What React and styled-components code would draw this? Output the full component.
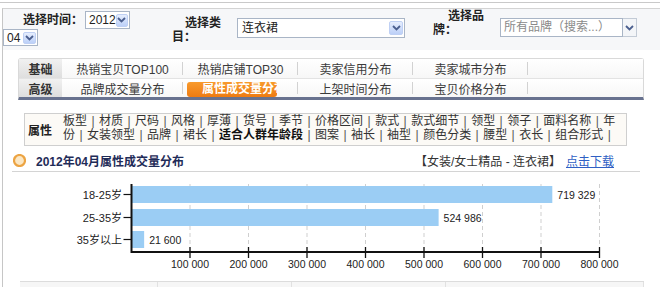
import React from 'react';
import styled, { createGlobalStyle } from 'styled-components';

const GlobalStyle = createGlobalStyle`
  html, body { margin: 0; padding: 0; background: #fff; }
  body {
    font-family: "Liberation Sans", "Noto Sans CJK SC", sans-serif;
    font-size: 12px;
    color: #333;
  }
`;

const Page = styled.div`
  width: 660px;
  height: 287px;
  overflow: hidden;
  padding-top: 2px;
  box-sizing: border-box;
`;

const TopRule = styled.div`
  height: 5px;
  border-top: 1px solid #c9c9c9;
`;

const Frame = styled.div`
  margin-left: 2px;
  border-left: 1px solid #c6c6c6;
  border-top: 1px solid #d3d3d3;
  height: 300px;
`;

const FilterBar = styled.div`
  display: flex;
  align-items: flex-start;
  height: 41px;
  background: #f6f7f9;
`;

const TimeGroup = styled.div`
  display: flex;
  flex-direction: column;
  width: 169px;
  padding-top: 2px;
`;

const TimeRow = styled.div`
  display: flex;
  align-items: center;
`;

const TimeLabel = styled.span`
  width: 62px;
  padding-left: 20px;
  font-weight: bold;
  color: #222;
  line-height: 18px;
`;

const FieldGroup = styled.div`
  display: flex;
  align-items: flex-start;
  margin-left: ${p => p.$ml}px;
`;

const WrapLabel = styled.div`
  width: ${p => p.$w}px;
  margin-top: ${p => p.$mt}px;
  font-weight: bold;
  color: #222;
  line-height: 14px;
`;

const LabelLine = styled.div`
  padding-left: ${p => p.$indent || 0}px;
`;

const Select = styled.div`
  display: flex;
  align-items: center;
  justify-content: space-between;
  box-sizing: border-box;
  width: ${p => p.$w}px;
  height: ${p => p.$h}px;
  margin-left: ${p => p.$ml || 0}px;
  margin-top: ${p => p.$mt || 0}px;
  padding: 0 1px 0 ${p => p.$pl || 4}px;
  border: 1px solid #a9b5c6;
  background: #fff;
  color: #222;
  line-height: 1;
`;

const ArrowBtn = styled.span`
  display: flex;
  align-items: center;
  justify-content: center;
  box-sizing: border-box;
  width: ${p => p.$w || 13}px;
  height: ${p => p.$h || 13}px;
  border: 1px solid #bfd0f4;
  border-radius: 2px;
  background: linear-gradient(#e6eefe, #bcd0f8);
`;

const Combo = styled.div`
  display: flex;
  margin-left: 15px;
  margin-top: 9px;
`;

const ComboInput = styled.div`
  box-sizing: border-box;
  width: 123px;
  height: 19px;
  padding-left: 3px;
  border: 1px solid #a9b5c6;
  background: #fff;
  color: #8a8a8a;
  line-height: 17px;
  white-space: nowrap;
  overflow: hidden;
`;

const ComboArrow = styled.div`
  display: flex;
  align-items: center;
  justify-content: center;
  box-sizing: border-box;
  width: 14px;
  height: 19px;
  border: 1px solid #c3cbd6;
  border-left: none;
  background: #f3f5f8;
`;

const Chevron = () => (
  <svg width="9" height="6" viewBox="0 0 9 6">
    <path d="M1 1 L4.5 4.5 L8 1" fill="none" stroke="#4b5f8f" strokeWidth="1.8" />
  </svg>
);

const TabPanel = styled.div`
  width: 626px;
  margin: 8px 0 0 15px;
  box-sizing: border-box;
  border: 1px solid #d9d9d9;
  border-bottom: 3px solid #68728f;
  border-radius: 3px 3px 0 0;
  background: #fff;
`;

const TabRow = styled.div`
  display: flex;
  height: ${p => p.$h}px;
  border-bottom: ${p => (p.$last ? 'none' : '1px solid #e3e3e3')};
  background: linear-gradient(#ffffff, #f7f7f7);
`;

const RowLabel = styled.div`
  flex: 0 0 43px;
  display: flex;
  align-items: center;
  justify-content: center;
  font-weight: bold;
  color: #333;
  background: linear-gradient(#f1f1f1, #dedede);
`;

const TabCell = styled.div`
  position: relative;
  flex: ${p => (p.$w ? `0 0 ${p.$w}px` : '1 1 auto')};
  display: flex;
  align-items: ${p => (p.$active ? 'flex-start' : 'center')};
  justify-content: ${p => (p.$active ? 'flex-start' : 'center')};
  padding-left: ${p => (p.$active ? 4 : 0)}px;
  box-sizing: border-box;
  color: #3a3a3a;
  &::after {
    content: '';
    position: absolute;
    right: 0;
    top: 3px;
    bottom: 3px;
    width: 1px;
    background: ${p => (p.$sep ? '#d2d2d2' : 'transparent')};
  }
`;

const ActiveTab = styled.span`
  display: block;
  width: 90px;
  height: 15px;
  margin-top: 3px;
  padding-left: 15px;
  box-sizing: border-box;
  border-radius: 3px;
  background: linear-gradient(#f89a2c, #ee7b12);
  color: #fff;
  font-weight: bold;
  line-height: 15px;
  white-space: nowrap;
  overflow: hidden;
`;

const AttrBox = styled.div`
  display: flex;
  width: 603px;
  height: 33px;
  margin: 13px 0 0 21px;
  box-sizing: border-box;
  border: 1px solid #cfcfcf;
  background: #fcfaf6;
`;

const AttrLabel = styled.div`
  flex: 0 0 38px;
  display: flex;
  align-items: center;
  padding-left: 3px;
  box-sizing: border-box;
  font-weight: bold;
  color: #222;
`;

const AttrList = styled.div`
  width: 562px;
  padding-top: 1px;
  line-height: 13.5px;
  color: #333;
`;

const AttrItem = styled.span`
  font-weight: ${p => (p.$bold ? 'bold' : 'normal')};
  color: ${p => (p.$bold ? '#111' : '#333')};
`;

const Sep = styled.span`
  display: inline-block;
  width: 12px;
  text-align: center;
  color: #555;
`;

const TitleRow = styled.div`
  display: flex;
  align-items: center;
  width: 628px;
  height: 22px;
  margin: 4px 0 0 9px;
  padding-left: 1px;
  box-sizing: border-box;
  border-bottom: 1px solid #d4d4d4;
`;

const TitleText = styled.span`
  margin-left: 10px;
  font-weight: bold;
  color: #1f2c58;
`;

const Crumb = styled.span`
  margin-left: auto;
  color: #333;
`;

const Download = styled.a`
  margin: 0 26px 0 5px;
  color: #2f5fc4;
  text-decoration: underline;
`;

const ChartWrap = styled.div`
  height: 109px;
`;

const TableHead = styled.div`
  display: grid;
  grid-template-columns: 138px 134px 154px 198px;
  width: 624px;
  height: 12px;
  margin-left: 17px;
  border-top: 1px solid #dcdcdc;
  background: #f6f6f6;
`;

const HeadCell = styled.div`
  border-right: 1px solid #e1e1e1;
`;

const TitleIcon = () => (
  <svg width="13" height="13" viewBox="0 0 13 13">
    <circle cx="6.5" cy="6.5" r="5.5" fill="#fbe7c4" stroke="#eca443" strokeWidth="2.2" />
  </svg>
);

const rows = [
  { label: '18-25岁', value: 719329, text: '719 329', y: 187 },
  { label: '25-35岁', value: 524986, text: '524 986', y: 210 },
  { label: '35岁以上', value: 21600, text: '21 600', y: 232 },
];

const X0 = 131.5;
const xOf = v => X0 + (v / 100000) * 58.5;
const ticks = [1, 2, 3, 4, 5, 6, 7, 8].map(i => i * 100000);

const Chart = () => (
  <svg width="657" height="109" viewBox="0 0 657 109">
    <g transform="translate(-3,-173)" fontFamily='"Liberation Sans", "Noto Sans CJK SC", sans-serif'>
      {ticks.map(t => (
        <line key={'g' + t} x1={xOf(t)} x2={xOf(t)} y1="185" y2="252" stroke="#cfcfcf" strokeDasharray="4 3" />
      ))}
      {rows.map(r => (
        <g key={r.label}>
          <rect x={X0} y={r.y} width={xOf(r.value) - X0} height="17" fill="#9bcdf4" />
          <text x={xOf(r.value) + 5} y={r.y + 12.5} fontSize="10.5" fill="#222">{r.text}</text>
          <text x="122" y={r.y + 12.5} fontSize="11" fill="#222" textAnchor="end">{r.label}</text>
          <line x1="123.5" x2={X0} y1={r.y + 8.5} y2={r.y + 8.5} stroke="#111" strokeWidth="1.2" />
        </g>
      ))}
      <line x1={X0} x2={X0} y1="185" y2="254" stroke="#111" strokeWidth="2" />
      <line x1={X0} x2={xOf(800000) + 0.5} y1="253" y2="253" stroke="#111" strokeWidth="2" />
      {ticks.map(t => (
        <g key={'t' + t}>
          <line x1={xOf(t)} x2={xOf(t)} y1="248" y2="259" stroke="#111" strokeWidth="1.3" />
          <text x={xOf(t)} y="269" fontSize="10.5" fill="#222" textAnchor="middle">
            {`${t / 1000} 000`}
          </text>
        </g>
      ))}
    </g>
  </svg>
);

const attrs = [
  '板型', '材质', '尺码', '风格', '厚薄', '货号', '季节', '价格区间', '款式', '款式细节',
  '领型', '领子', '面料名称', '年份', '女装领型', '品牌', '裙长', '适合人群年龄段', '图案',
  '袖长', '袖型', '颜色分类', '腰型', '衣长', '组合形式',
];

export default function App() {
  return (
    <Page>
      <GlobalStyle />
      <TopRule />
      <Frame>
        <FilterBar>
          <TimeGroup>
            <TimeRow>
              <TimeLabel>选择时间：</TimeLabel>
              <Select $w={45} $h={18} $pl={3}>
                2012<ArrowBtn><Chevron /></ArrowBtn>
              </Select>
            </TimeRow>
            <Select $w={35} $h={17} $pl={3}>
              04<ArrowBtn $h={12}><Chevron /></ArrowBtn>
            </Select>
          </TimeGroup>
          <FieldGroup $ml={0}>
            <WrapLabel $w={50} $mt={7}>
              <LabelLine $indent={13}>选择类</LabelLine>
              <LabelLine>目：</LabelLine>
            </WrapLabel>
            <Select $w={168} $h={20} $ml={15} $mt={9}>
              连衣裙<ArrowBtn $w={14} $h={14}><Chevron /></ArrowBtn>
            </Select>
          </FieldGroup>
          <FieldGroup $ml={28}>
            <WrapLabel $w={52} $mt={0}>
              <LabelLine $indent={15}>选择品</LabelLine>
              <LabelLine>牌：</LabelLine>
            </WrapLabel>
            <Combo>
              <ComboInput>所有品牌（搜索...）</ComboInput>
              <ComboArrow><Chevron /></ComboArrow>
            </Combo>
          </FieldGroup>
        </FilterBar>

        <TabPanel>
          <TabRow $h={19}>
            <RowLabel>基础</RowLabel>
            <TabCell $w={121} $sep>热销宝贝TOP100</TabCell>
            <TabCell $w={115} $sep>热销店铺TOP30</TabCell>
            <TabCell $w={115} $sep>卖家信用分布</TabCell>
            <TabCell $w={115} $sep>卖家城市分布</TabCell>
            <TabCell />
          </TabRow>
          <TabRow $h={18} $last>
            <RowLabel>高级</RowLabel>
            <TabCell $w={121} $sep>品牌成交量分布</TabCell>
            <TabCell $w={115} $sep $active>
              <ActiveTab>属性成交量分布</ActiveTab>
            </TabCell>
            <TabCell $w={115} $sep>上架时间分布</TabCell>
            <TabCell $w={115} $sep>宝贝价格分布</TabCell>
            <TabCell />
          </TabRow>
        </TabPanel>

        <AttrBox>
          <AttrLabel>属性</AttrLabel>
          <AttrList>
            {attrs.map(a => (
              <React.Fragment key={a}>
                <AttrItem $bold={a === '适合人群年龄段'}>{a}</AttrItem>
                <Sep>|</Sep>
              </React.Fragment>
            ))}
          </AttrList>
        </AttrBox>

        <TitleRow>
          <TitleIcon />
          <TitleText>2012年04月属性成交量分布</TitleText>
          <Crumb>【女装/女士精品 - 连衣裙】</Crumb>
          <Download href="#">点击下载</Download>
        </TitleRow>

        <ChartWrap>
          <Chart />
        </ChartWrap>

        <TableHead>
          <HeadCell />
          <HeadCell />
          <HeadCell />
          <HeadCell />
        </TableHead>
      </Frame>
    </Page>
  );
}
